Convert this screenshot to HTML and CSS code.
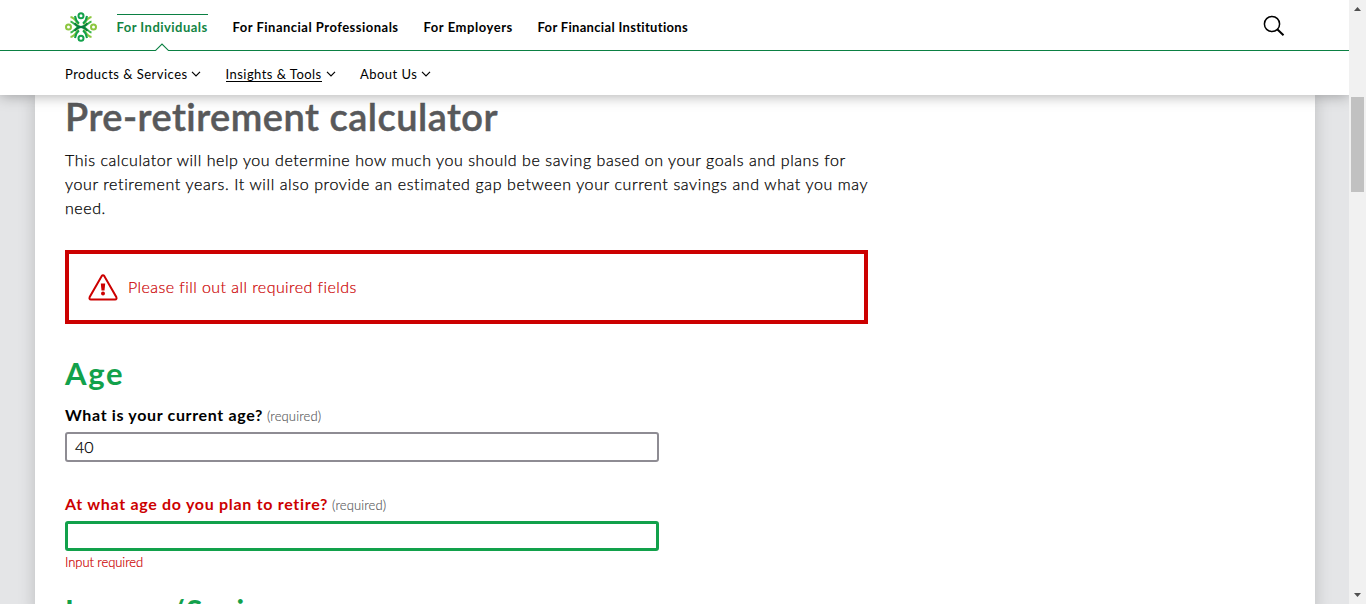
FILE: index.html
```html
<!DOCTYPE html>
<html lang="en">
<head>
<meta charset="utf-8">
<title>Pre-retirement calculator</title>
<link rel="stylesheet" href="styles.css">
</head>
<body>
<div class="app">
  <div class="viewport">
    <header class="header">
      <div class="topbar">
        <svg class="logo" viewBox="0 0 32 30" fill="none">
          <g stroke="#8cc63f" stroke-width="2">
            <circle cx="3.500" cy="15" r="2.500"/><circle cx="28.500" cy="15" r="2.500"/>
            <path d="M5.500 5c4 .5 5.500 4 8 7.500M26.500 5c-4 .5-5.500 4-8 7.500M5.500 25c4-.5 5.500-4 8-7.500M26.500 25c-4-.5-5.500-4-8-7.500"/>
          </g>
          <g stroke="#39b54a" stroke-width="2">
            <path d="M5.500 9.500c3.500.5 5 5.500 9 5.500-4 0-5.500 5-9 5.500M26.500 9.500c-3.500.5-5 5.500-9 5.500 4 0 5.500 5 9 5.500"/>
          </g>
          <g stroke="#12a14b" stroke-width="2">
            <circle cx="16" cy="3.700" r="2.500"/><circle cx="16" cy="26.300" r="2.500"/>
            <path d="M10 4c.5 3.500 1.500 5.500 4 7.500M22 4c-.5 3.500-1.500 5.500-4 7.500M10 26c.5-3.500 1.500-5.500 4-7.500M22 26c-.5-3.500-1.500-5.500-4-7.500"/>
          </g>
          <path d="M9.500 11c2 2.500 4 4 6.500 4s4.500-1.500 6.500-4M9.500 19c2-2.500 4-4 6.500-4s4.500 1.500 6.500 4" stroke="#087f3f" stroke-width="1.900"/>
        </svg>
        <nav class="primary">
          <a class="tab tab-active">For Individuals</a>
          <a class="tab tab-pros">For Financial Professionals</a>
          <a class="tab tab-employers">For Employers</a>
          <a class="tab tab-institutions">For Financial Institutions</a>
        </nav>
        <svg class="search" viewBox="0 0 22 22" fill="none" stroke="#000"><circle cx="9" cy="9" r="7.600" stroke-width="1.500"/><path d="M14.500 14.500l6 5.800" stroke-width="2"/></svg>
      </div>
      <svg class="notch" viewBox="0 0 14 8"><path d="M0 8L7 1l7 7" fill="#fff" stroke="#0b8043" stroke-width="1.100"/></svg>
      <nav class="secondary">
        <a class="sub"><span class="sub-products">Products &amp; Services</span><svg class="chev" viewBox="0 0 10 6"><path d="M1 .8l4 4 4-4"/></svg></a>
        <a class="sub"><span class="sub-insights">Insights &amp; Tools</span><svg class="chev" viewBox="0 0 10 6"><path d="M1 .8l4 4 4-4"/></svg></a>
        <a class="sub"><span class="sub-about">About Us</span><svg class="chev" viewBox="0 0 10 6"><path d="M1 .8l4 4 4-4"/></svg></a>
      </nav>
    </header>
    <main class="page">
      <h1 class="title">Pre-retirement calculator</h1>
      <p class="intro"><span class="l1">This calculator will help you determine how much you should be saving based on your goals and plans for</span><br><span class="l2">your retirement years. It will also provide an estimated gap between your current savings and what you may</span><br><span class="l3">need.</span></p>
      <div class="alert">
        <svg class="warn" viewBox="0 0 30 27"><path d="M13.600 2.200q1.400-1.800 2.800 0L28.300 23q.9 2.400-1.300 2.600H3Q.8 25.400 1.700 23z" fill="none" stroke="#c00" stroke-width="2"/><path d="M12.800 9.500h4.400l-.7 7h-3z" fill="#c00"/><circle cx="15" cy="19.600" r="2" fill="#c00"/></svg>
        <span class="alert-text">Please fill out all required fields</span>
      </div>
      <h2 class="section section-age">Age</h2>
      <label class="label"><span class="q1">What is your current age?</span><small class="req">(required)</small></label>
      <div class="input">40</div>
      <label class="label label-error"><span class="q2">At what age do you plan to retire?</span><small class="req">(required)</small></label>
      <div class="input input-focus"></div>
      <div class="error">Input required</div>
      <h2 class="section section-income">Income/Savings</h2>
    </main>
  </div>
  <div class="scrollbar">
    <svg class="arrow" viewBox="0 0 7 4"><path d="M0 4l3.500-4L7 4z"/></svg>
    <div class="thumb"></div>
    <svg class="arrow arrow-down" viewBox="0 0 7 4"><path d="M0 0l3.500 4L7 0z"/></svg>
  </div>
</div>
</body>
</html>
```
FILE: styles.css
```css
* { box-sizing: border-box; }
body { margin: 0; font-family: Lato, sans-serif; color: #000; }
.app { display: flex; width: 1366px; height: 604px; overflow: hidden; }
.viewport { width: 1349px; height: 604px; background: #e4e5e7; overflow: hidden; }
.header { position: relative; z-index: 2; height: 95px; background: #fff; box-shadow: 0 0 14px rgba(0,0,0,.36); }
.topbar { display: flex; align-items: flex-start; height: 51px; padding-left: 65px; border-bottom: 1px solid #0b8043; }
.logo { width: 32px; height: 30px; margin-top: 12px; }
.primary { display: flex; gap: 25px; margin: 14px 0 0 19.500px; font-size: 13px; font-weight: 700; line-height: 24px; }
.tab { white-space: nowrap; border-top: 1px solid transparent; }
.tab-active { width: 91px; color: #128443; border-color: #0b8043; letter-spacing: .47px; }
.tab-pros { width: 166px; letter-spacing: .49px; }
.tab-employers { width: 89px; letter-spacing: .55px; }
.tab-institutions { width: 151px; letter-spacing: .32px; }
.search { width: 22px; height: 22px; margin: 15px 64px 0 auto; }
.notch { position: absolute; left: 155px; top: 43px; width: 14px; height: 8px; }
.secondary { display: flex; gap: 24.500px; height: 44px; padding: 15px 0 0 65px; font-size: 13px; line-height: 17px; }
.sub { display: flex; gap: 4px; }
.sub span { height: 16px; white-space: nowrap; letter-spacing: .48px; }
.sub .sub-products { width: 122px; }
.sub .sub-insights { width: 96px; border-bottom: 1px solid #000; letter-spacing: .46px; }
.sub .sub-about { width: 57px; letter-spacing: .46px; }
.chev { width: 10px; height: 6px; margin-top: 5px; fill: none; stroke: #000; stroke-width: 1.2; }
.page { width: 1280px; height: 520px; margin-left: 35px; padding: 1px 30px 0; background: #fff; box-shadow: 0 0 16px rgba(0,0,0,.18); }
.title { margin: -2px 0 0; font-size: 38px; font-weight: 600; line-height: 44px; color: #58595b; letter-spacing: .5px; white-space: nowrap; -webkit-text-stroke: .5px #58595b; }
.intro { margin: 10px 0 0; width: 850px; font-size: 16px; font-weight: 300; line-height: 24px; white-space: nowrap; letter-spacing: .56px; -webkit-text-stroke: .25px currentColor; }
.l2 { letter-spacing: .615px; }
.alert { display: flex; align-items: center; width: 803px; height: 74px; margin-top: 30px; padding-left: 19px; border: 4px solid #c00; color: #c00; font-size: 16px; font-weight: 300; letter-spacing: .44px; }
.alert-text { margin-top: -2px; -webkit-text-stroke: .2px currentColor; }
.warn { width: 30px; height: 27px; margin-right: 10px; }
.section { margin: 0; font-size: 30px; line-height: 40px; color: #12a14b; white-space: nowrap; letter-spacing: 1.4px; }
.section-age { margin-top: 29px; font-size: 31px; letter-spacing: 1.7px; }
.label { display: flex; align-items: baseline; gap: 4px; height: 24px; margin-top: 10px; font-size: 16px; line-height: 24px; font-weight: 700; white-space: nowrap; letter-spacing: .65px; }
.label-error { margin-top: 30px; color: #c00; }
.q2 { letter-spacing: .7px; }
.req { font-size: 13px; font-weight: 300; color: #58595b; letter-spacing: .13px; -webkit-text-stroke: .15px currentColor; }
.input { width: 594px; height: 30px; margin-top: 5px; padding-left: 8px; border: 2px solid #8e8c93; border-radius: 3px; font-size: 16px; font-weight: 300; line-height: 26px; -webkit-text-stroke: .25px currentColor; }
.input-focus { border: 3px solid #12a14b; }
.error { margin-top: 3px; font-size: 13px; font-weight: 300; line-height: 16px; color: #c00; letter-spacing: -.07px; -webkit-text-stroke: .2px currentColor; }
.section-income { margin-top: 20px; letter-spacing: 1.25px; }
.scrollbar { display: flex; flex-direction: column; align-items: center; width: 17px; background: #f1f1f1; }
.arrow { width: 7px; height: 4px; margin-top: 7px; fill: #505050; }
.thumb { width: 13px; height: 95px; margin-top: 86px; background: #c1c1c1; }
.arrow-down { margin-top: auto; margin-bottom: 7px; }
```
